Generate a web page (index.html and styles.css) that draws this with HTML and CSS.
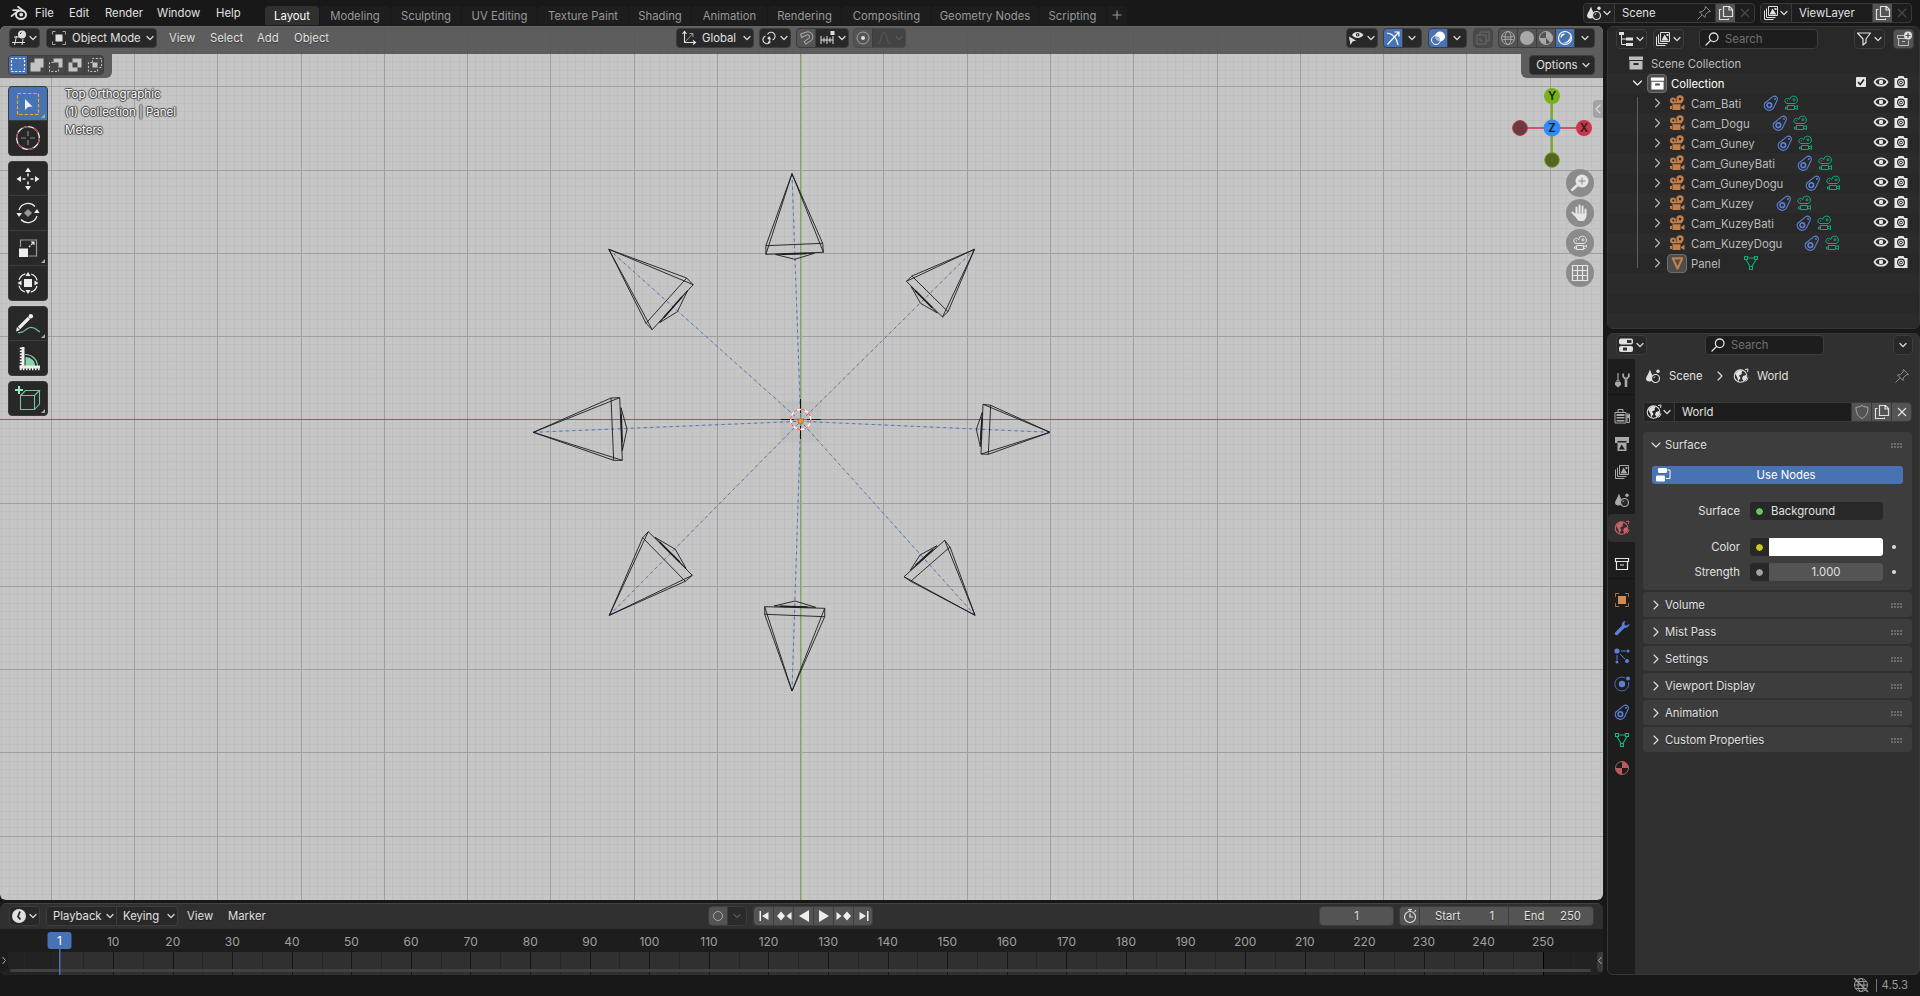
FILE: index.html
```html
<!DOCTYPE html>
<html lang="en">
<head>
<meta charset="utf-8">
<title>Blender</title>
<link rel="stylesheet" href="styles.css">
</head>
<body>
<svg class="sprite" aria-hidden="true">
  <symbol id="blender" viewBox="0 0 18 16"><path d="M1.5 11.2 9 5.2H3.2M8 1.8l6.6 5" fill="none" stroke="currentColor" stroke-width="1.7" stroke-linecap="round" stroke-linejoin="round"/><ellipse cx="11" cy="9.7" rx="5" ry="4.3" fill="none" stroke="currentColor" stroke-width="2"/><circle cx="11.2" cy="9.6" r="1.9" fill="currentColor"/></symbol>
  <symbol id="plus" viewBox="0 0 10 10"><path d="M5 .5v9M.5 5h9" fill="none" stroke="currentColor" stroke-width="1.1"/></symbol>
  <symbol id="down" viewBox="0 0 10 10"><path d="M2 3.5 5 6.7 8 3.5" fill="none" stroke="currentColor" stroke-width="1.2" stroke-linecap="round" stroke-linejoin="round"/></symbol>
  <symbol id="right" viewBox="0 0 10 10"><path d="M3 1 7 5 3 9" fill="none" stroke="currentColor" stroke-width="1.1" stroke-linecap="round" stroke-linejoin="round"/></symbol>
  <symbol id="wide-down" viewBox="0 0 10 10"><path d="M1 3 5 7 9 3" fill="none" stroke="currentColor" stroke-width="1.1" stroke-linecap="round" stroke-linejoin="round"/></symbol>
  <symbol id="editor3d" viewBox="0 0 16 16"><path d="M3 7h5M1 12.500h13M5.500 6 3.500 15M12 9l-1 6" fill="none" stroke="currentColor"/><circle cx="11" cy="4.500" r="4" fill="currentColor"/><path d="M9.200 4a2 2 0 0 1 1.400-1.400" stroke="#282828" fill="none"/></symbol>
  <symbol id="objmode" viewBox="0 0 16 16"><rect x="4.500" y="4.500" width="7" height="7" fill="currentColor"/><path d="M1.500 4.500v-3h3M11.500 1.500h3v3M14.500 11.500v3h-3M4.500 14.500h-3v-3" fill="none" stroke="currentColor" opacity=".65"/></symbol>
  <symbol id="orient" viewBox="0 0 16 16"><path d="M3.500 2v10.500H14M1.500 4 3.500 1.500 5.500 4M12 10.500l2.500 2-2.500 2" fill="none" stroke="currentColor" stroke-width="1.100"/><path d="M4 12 11.500 4M8.500 3.500H12V7" fill="none" stroke="currentColor" opacity=".6"/></symbol>
  <symbol id="pivot" viewBox="0 0 16 16"><circle cx="8" cy="8.300" r="1.300" fill="currentColor"/><path d="M6.500 4.500a4 4 0 1 1 5 5.500M9.500 11.500a4 4 0 1 1-5-5.500M8 6.500a4 4 0 0 1-1 6" fill="none" stroke="currentColor" stroke-width="1.100"/></symbol>
  <symbol id="magnet" viewBox="0 0 16 16"><path d="M2 5.500 6.500 2.500a5 5 0 0 1 7 7L9 14 7 12l4-4.500a2 2 0 0 0-3-2.500L3.500 8.500Z" fill="none" stroke="currentColor" transform="rotate(12 8 8)"/></symbol>
  <symbol id="snapinc" viewBox="0 0 16 16"><path d="M2 6v8M5 7.500v5M8 6v8M11 7.500v5M14 6v8M2 10h12" stroke="currentColor" fill="none"/><rect x="11.500" y="1" width="4" height="4" fill="currentColor"/></symbol>
  <symbol id="prop" viewBox="0 0 16 16"><circle cx="8" cy="8" r="6" fill="none" stroke="currentColor" opacity=".55"/><circle cx="8" cy="8" r="2" fill="currentColor"/></symbol>
  <symbol id="falloff" viewBox="0 0 16 16"><path d="M1.500 13.500c4 0 3.500-11 6.500-11s2.500 11 6.500 11" fill="none" stroke="currentColor"/></symbol>
  <symbol id="visib" viewBox="0 0 16 16"><path d="M4 5c1.500-3.500 8.500-4.500 11.500 0-3 4-9 4-11.500 0Z" fill="currentColor"/><circle cx="9.700" cy="4.700" r="1.800" fill="#282828"/><circle cx="9.700" cy="4.700" r=".7" fill="currentColor"/><path d="M1 6.500 8 10.500 4.500 11.500 2.500 15Z" fill="currentColor"/></symbol>
  <symbol id="gizmo" viewBox="0 0 16 16"><path d="M2 3c7 1 10 5 11 12M2.500 14.500 13.500 2.500M9.500 2h4.500v4.500" fill="none" stroke="currentColor" stroke-width="1.200"/></symbol>
  <symbol id="overlay" viewBox="0 0 16 16"><circle cx="10" cy="6.500" r="5" fill="currentColor"/><circle cx="6" cy="10" r="4.500" fill="#4772b3" fill-opacity=".5" stroke="currentColor"/></symbol>
  <symbol id="xray" viewBox="0 0 16 16"><path d="M2 5h9v9H2ZM5 5V2h9v9h-3M5 8v3h3" fill="none" stroke="currentColor"/></symbol>
  <symbol id="wire" viewBox="0 0 16 16"><g fill="none" stroke="currentColor"><circle cx="8" cy="8" r="6.500"/><ellipse cx="8" cy="8" rx="3" ry="6.500"/><path d="M2 6c4 1.500 8 1.500 12 0M2 10c4-1 8-1 12 0"/></g></symbol>
  <symbol id="solid" viewBox="0 0 16 16"><circle cx="8" cy="8" r="7" fill="currentColor"/></symbol>
  <symbol id="material" viewBox="0 0 16 16"><circle cx="8" cy="8" r="6.500" fill="none" stroke="currentColor"/><path d="M8 8V1.500A6.500 6.500 0 0 1 14.500 8ZM8 8v6.500A6.500 6.500 0 0 1 1.500 8Z" fill="currentColor"/></symbol>
  <symbol id="matprev" viewBox="0 0 16 16"><circle cx="8" cy="8" r="6.500" fill="none" stroke="currentColor"/><path d="M8 1.500A6.500 6.500 0 0 1 14.500 8 6.500 6.500 0 0 1 12.500 12.700L8 8ZM8 8v6.500A6.500 6.500 0 0 1 1.500 8Z" fill="currentColor"/></symbol>
  <symbol id="rendered" viewBox="0 0 16 16"><circle cx="8" cy="8" r="6.500" fill="none" stroke="currentColor" stroke-width="1.200"/><path d="M4 7.500a4 4 0 0 1 3.500-3.500" fill="none" stroke="currentColor" stroke-width="1.300"/><path d="M13.500 5.500A6 6 0 0 1 6 13c4-.5 6.500-3 7.500-7.500Z" fill="currentColor"/></symbol>
  <symbol id="outliner" viewBox="0 0 16 16"><path d="M1 1h5v3H1ZM8 6.500h7v3H8ZM8 12h7v3H8Z" fill="currentColor"/><path d="M3.500 4v9.500H8M3.500 8H8" fill="none" stroke="currentColor"/></symbol>
  <symbol id="images" viewBox="0 0 16 16"><path d="M5.500 1.500h9v9h-9ZM3.500 3.500v9h9M1.500 5.500v9h9" fill="none" stroke="currentColor"/><path d="M6.500 9.500 9.500 3.500 13.500 9.500ZM11.500 3h2v2h-2Z" fill="currentColor"/></symbol>
  <symbol id="search" viewBox="0 0 16 16"><circle cx="9.700" cy="6.300" r="4.300" fill="none" stroke="currentColor" stroke-width="1.300"/><path d="M6.500 9.500 2 14" stroke="currentColor" stroke-width="1.300" stroke-linecap="round"/></symbol>
  <symbol id="filter" viewBox="0 0 16 16"><path d="M1.500 2h13L10 8v3.500L7 14V8Z" fill="none" stroke="currentColor" stroke-width="1.200" stroke-linejoin="round"/></symbol>
  <symbol id="newcoll" viewBox="0 0 16 16"><path d="M8 4.500H1.500v3h8M2.500 7.500v7h10V9.500M6 10.500h3" fill="none" stroke="currentColor" opacity=".75"/><circle cx="12" cy="4.500" r="4" fill="currentColor"/><path d="M9.500 4.500h5M12 2v5" stroke="#545454" stroke-width="1.200"/></symbol>
  <symbol id="coll" viewBox="0 0 16 16"><path d="M1 1.500h14V5H1ZM1.500 6h13v8.500h-13ZM5.500 8v2h5V8Z" fill="currentColor" fill-rule="evenodd"/></symbol>
  <symbol id="coll-line" viewBox="0 0 16 16"><path d="M1.500 2.500h13v3h-13ZM2.500 5.500v8h11v-8M6 9h4" fill="none" stroke="currentColor" stroke-width="1.200"/></symbol>
  <symbol id="cam" viewBox="0 0 16 16"><circle cx="4" cy="5.500" r="3" fill="currentColor"/><circle cx="11" cy="4" r="3.700" fill="currentColor"/><path d="M3 6.500h10v1.700H3ZM3.500 9.300h8v5.700h-8ZM12 12l3.500-2.500v5.500L12 13Z M1 11h2v3H1Z" fill="currentColor"/><circle cx="4.300" cy="5.500" r="1" fill="#29241f"/><circle cx="11" cy="4" r="1.200" fill="#29241f"/></symbol>
  <symbol id="camdata" viewBox="0 0 16 16"><g fill="none" stroke="currentColor"><path d="M4 8.500a2.600 2.600 0 1 1 2.700-3.800 3.900 3.900 0 1 1 5.500 3.800Z"/><path d="M4.500 10.500h7v4h-7ZM11.500 12l3-1.500v4l-3-1.500M4.500 12H2.500v2h2"/><circle cx="11" cy="4.800" r="1"/><path d="M4 5.800h1"/></g></symbol>
  <symbol id="constraint" viewBox="0 0 16 16"><g fill="none" stroke="currentColor" stroke-width="1.100"><path d="M1.700 8.200 9.500 1.900c3-1.900 5.500.3 4.700 3.100l-3.500 7.500A4.800 4.800 0 1 1 1.700 8.200Z"/><circle cx="6.300" cy="10.200" r="2.300" stroke-width="1.700"/></g><circle cx="12" cy="4" r="1" fill="currentColor"/></symbol>
  <symbol id="tri" viewBox="0 0 16 16"><path d="M3 2.500h10L8 13.500Z" fill="none" stroke="currentColor" stroke-width="2.400" stroke-linejoin="round"/></symbol>
  <symbol id="meshdata" viewBox="0 0 16 16"><path d="M4.500 3h7M3 4.500 7.300 12M13 4.500 8.700 12M1.500 1.500h3v3h-3ZM11.500 1.500h3v3h-3ZM6.500 11.500h3v3h-3Z" fill="none" stroke="currentColor" stroke-width="1.100"/></symbol>
  <symbol id="eye" viewBox="0 0 16 16"><path d="M1.500 8C4 3 12 3 14.500 8 12 13 4 13 1.500 8Z" fill="none" stroke="currentColor" stroke-width="1.700"/><circle cx="8" cy="8" r="2.200" fill="currentColor"/></symbol>
  <symbol id="photo" viewBox="0 0 16 16"><path d="M1.500 4h3l1-2h5l1 2h3v10h-13Z" fill="currentColor"/><circle cx="8" cy="8.500" r="3.400" fill="none" stroke="#282828" stroke-width="1.200"/><circle cx="8" cy="8.500" r="1.400" fill="none" stroke="#282828"/></symbol>
  <symbol id="check" viewBox="0 0 16 16"><rect x="3" y="3" width="10" height="10" rx="1" fill="currentColor"/><path d="m5 8 2.200 2.500L11 5.500" fill="none" stroke="#222" stroke-width="1.600"/></symbol>
  <symbol id="propedit" viewBox="0 0 16 16"><rect x="1" y="1.500" width="14" height="6" rx="2" fill="currentColor"/><rect x="1" y="9" width="14" height="6" rx="2" fill="currentColor"/><path d="M9 3h4.500v3H9ZM5 10.500h4v3H5Z" fill="#303030"/></symbol>
  <symbol id="scene" viewBox="0 0 16 16"><path d="M5 1.500C6 5 8 8 8 11c0 1-.8 2.500-3.500 2.500S1 12 1 10.500C1.500 8 4 5 5 1.500Z" fill="currentColor"/><circle cx="10.500" cy="10.500" r="4" fill="#282828" stroke="currentColor" stroke-width="1.200"/><path d="M8.800 10a2 2 0 0 1 1.400-1.300" fill="none" stroke="currentColor"/><circle cx="13" cy="3.300" r="1.700" fill="currentColor"/></symbol>
  <symbol id="world" viewBox="0 0 16 16"><circle cx="7.500" cy="8" r="6.300" fill="none" stroke="currentColor" stroke-width="1.100"/><path d="M2 5.500 6 2l4 .5-1.500 2L9 6 6 7.500 7.500 10 5 13.500 4.500 10ZM10 8l3-1v3.500L10.500 13 9 10.500Z" fill="currentColor"/><path d="M12 1.500 15 1l-.5 3M12.500 13.500a6 6 0 0 0 2.500-4" fill="none" stroke="currentColor"/></symbol>
  <symbol id="pin" viewBox="0 0 16 16"><path d="M9.500 1.500 14.500 6.500 12 7 9.500 9.500 9 12.500 3.500 7 6.500 6.500 9 4ZM6 10 1.500 14.500" fill="none" stroke="currentColor" stroke-linejoin="round"/></symbol>
  <symbol id="copy" viewBox="0 0 16 16"><path d="M5.500 1.500h6l3 3v7h-9ZM11 1.500v3.500h3.500M3.500 4.500h-2v10h9v-1" fill="none" stroke="currentColor" stroke-width="1.200"/></symbol>
  <symbol id="close" viewBox="0 0 16 16"><path d="m4 4 8 8M12 4l-8 8" stroke="currentColor" stroke-width="1.200"/></symbol>
  <symbol id="shield" viewBox="0 0 16 16"><path d="M8 1.500c2 1.300 4 1.700 6 1.800 0 5-1.500 9-6 11.200C3.500 12.300 2 8.300 2 3.300c2-.1 4-.5 6-1.800Z" fill="none" stroke="currentColor"/></symbol>
  <symbol id="nodes" viewBox="0 0 16 16"><rect x="3" y="1" width="9" height="5" rx="1.200" fill="currentColor"/><rect x="1" y="8.500" width="9" height="6" rx="1.200" fill="currentColor"/><path d="M12.500 3H15v8.500h-4" fill="none" stroke="currentColor"/></symbol>
  <symbol id="tool" viewBox="0 0 16 16"><path d="M4 1v8" stroke="currentColor" stroke-width="1.200"/><path d="M2 9h4M1.500 10.500h5v2.500L4 15l-2.500-2Z" fill="currentColor" stroke="currentColor"/><path d="M12 15V7.500" stroke="currentColor" stroke-width="2.600"/><path d="M9.200 1.500v3l1.800 2h2l1.800-2v-3" fill="none" stroke="currentColor" stroke-width="1.800"/></symbol>
  <symbol id="render" viewBox="0 0 16 16"><path d="M1 4.500h11V15H1ZM4 4V1.500h5V4M13 6h2.500v8.500H13Z" fill="none" stroke="currentColor"/><path d="M2.500 6h8v2h-8ZM2.500 9h8v1.500h-8ZM2.500 12h8v1.500h-8ZM13 7h2v3h-2Z" fill="currentColor"/></symbol>
  <symbol id="output" viewBox="0 0 16 16"><path d="M1 1h14v6h-2.500V5h-9v2H1ZM3.500 6.500h9v8.500h-9Z" fill="currentColor"/><path d="m5 13.500 2.500-5 3.500 5Z" fill="#1d1d1d"/></symbol>
  <symbol id="object" viewBox="0 0 16 16"><rect x="4" y="4" width="8" height="8" fill="currentColor"/><path d="M1.500 5V1.500H5M11 1.500h3.500V5M14.500 11v3.500H11M5 14.500H1.500V11" fill="none" stroke="currentColor" opacity=".75"/></symbol>
  <symbol id="wrench" viewBox="0 0 16 16"><path d="M2.500 13.500 9 7" stroke="currentColor" stroke-width="3.500" stroke-linecap="round"/><path d="M11.500 1C8.500 1 7.500 4 8 6.500l1.500 1.500c2.500.5 6-1 6-4.500L13 5.500l-2.300-.3-.3-2Z" fill="currentColor"/></symbol>
  <symbol id="particles" viewBox="0 0 16 16"><circle cx="3" cy="3" r="2.600" fill="currentColor"/><circle cx="14" cy="3" r="1.500" fill="currentColor"/><circle cx="3" cy="14" r="1.500" fill="currentColor"/><circle cx="13" cy="13" r="2" fill="currentColor"/><path d="M7 3h5M3 7v5M6 6l5 5" stroke="currentColor" fill="none"/></symbol>
  <symbol id="physics" viewBox="0 0 16 16"><circle cx="8" cy="8" r="3.200" fill="currentColor"/><circle cx="14" cy="2.500" r="1.900" fill="currentColor"/><path d="M11 1.800A7 7 0 1 0 14.500 6" fill="none" stroke="currentColor" opacity=".8"/></symbol>
  <symbol id="clock" viewBox="0 0 16 16"><circle cx="8" cy="8" r="7" fill="currentColor"/><path d="M9 3.500 7 8.500l2.500 3" fill="none" stroke="#282828" stroke-width="1.800"/></symbol>
  <symbol id="rec" viewBox="0 0 16 16"><circle cx="8" cy="8" r="4.500" fill="none" stroke="currentColor"/></symbol>
  <symbol id="first" viewBox="0 0 16 16"><path d="M3.500 3H5v10H3.500ZM12.500 4v8L6 8Z" fill="currentColor"/></symbol>
  <symbol id="prevkey" viewBox="0 0 16 16"><path d="M5 3.500 9 8 5 12.500 1 8ZM15.500 4v8L10.500 8Z" fill="currentColor"/></symbol>
  <symbol id="playback" viewBox="0 0 16 16"><path d="M13 2v12L3 8Z" fill="currentColor"/></symbol>
  <symbol id="stopwatch" viewBox="0 0 16 16"><circle cx="8" cy="9" r="5.500" fill="none" stroke="currentColor" stroke-width="1.200"/><path d="M8 5.500V9h3M6 1.500h4M8 1.500v2M12.500 3.500l1.500-1" fill="none" stroke="currentColor" stroke-width="1.200"/></symbol>
  <symbol id="offline" viewBox="0 0 16 16"><g fill="none" stroke="currentColor"><circle cx="8" cy="8" r="6.500"/><ellipse cx="8" cy="8" rx="3" ry="6.500"/><path d="M1.500 8h13M2.500 4.500h11M2.500 11.500h11"/><path d="M1 1l14 14" stroke-width="1.500"/></g></symbol>
  <symbol id="s-set" viewBox="0 0 16 16"><rect x="1.500" y="1.500" width="13" height="13" fill="none" stroke="currentColor" stroke-width="1.200" stroke-dasharray="2 1.700"/></symbol>
  <symbol id="s-ext" viewBox="0 0 16 16"><path d="M5.500 1.500h9v9h-3v4h-10v-9h4Z" fill="currentColor"/></symbol>
  <symbol id="s-sub" viewBox="0 0 16 16"><path d="M5.500 1.500h9v9h-4v-5h-5Z" fill="currentColor"/><path d="M5.500 5.500h-4v9h9v-4" fill="none" stroke="currentColor" stroke-dasharray="2 1.700"/></symbol>
  <symbol id="s-dif" viewBox="0 0 16 16"><path d="M5.500 1.500h9v9h-4v4h-9v-9h4ZM5.500 5.500v5h5v-5Z" fill="currentColor" fill-rule="evenodd"/></symbol>
  <symbol id="s-int" viewBox="0 0 16 16"><path d="M5.500 5.500h5v5h-5Z" fill="currentColor"/><path d="M5.500 5.500v-4h9v9h-4M5.500 5.500h-4v9h9v-4" fill="none" stroke="currentColor" stroke-dasharray="2 1.700"/></symbol>
  <symbol id="t-select" viewBox="0 0 26 26"><rect x="2.500" y="2.500" width="21" height="21" fill="none" stroke="#f5a623" stroke-width="1.200" stroke-dasharray="3.500 1.750"/><path d="M10 8v11l3-3 4.500-.5Z" fill="#eee"/></symbol>
  <symbol id="t-cursor" viewBox="0 0 26 26"><circle cx="13" cy="13" r="11.300" fill="none" stroke="#eee" stroke-width="1.300"/><circle cx="13" cy="13" r="11.300" fill="none" stroke="#9b4549" stroke-width="1.400" stroke-dasharray="6 5.800"/><path d="M13 6v5M13 15v5M6 13h5M15 13h5" stroke="#888" stroke-width="1.200"/></symbol>
  <symbol id="t-move" viewBox="0 0 26 26"><path d="M13 1.500l3 4.500h-6ZM13 24.500l3-4.500h-6ZM1.500 13 6 10v6ZM24.500 13 20 10v6Z" fill="#eee"/><path d="M13 7.500v3M13 15.500v3M7.500 13h3M15.500 13h3" stroke="#eee" stroke-width="1.500"/></symbol>
  <symbol id="t-rotate" viewBox="0 0 26 26"><path d="M4 10A9.500 9.500 0 0 1 20 6.500M22 16A9.500 9.500 0 0 1 6 19.500" fill="none" stroke="#eee" stroke-width="1.200"/><path d="M1.500 13h5.500L4 17ZM19 13h5.500L22 9Z" fill="#eee"/><path d="M13 9.500 16.500 13 13 16.500 9.500 13Z" fill="#999" stroke="#999"/></symbol>
  <symbol id="t-scale" viewBox="0 0 26 26"><path d="M5.500 12V5h16v16h-8" fill="none" stroke="#999" stroke-width="1.200"/><rect x="4" y="13.500" width="9" height="8.500" fill="#eee"/><path d="m14 12 4-4" stroke="#eee" stroke-width="1.200" stroke-dasharray="2 1"/><path d="M15.500 6.500h4v4Z" fill="#eee"/></symbol>
  <symbol id="t-transform" viewBox="0 0 26 26"><circle cx="13" cy="13" r="9.500" fill="none" stroke="#eee" stroke-width="1.200" stroke-dasharray="9 5.900" stroke-dashoffset="-3"/><rect x="9" y="9" width="8" height="8" fill="#eee"/><path d="M13 2l2.500 4h-5ZM13 24l2.500-4h-5ZM2.500 13l4-2.500v5ZM23.500 13l-4-2.500v5Z" fill="#eee"/></symbol>
  <symbol id="t-annotate" viewBox="0 0 26 26"><path d="M3 21.500c7 1.500 6-4 12-5 5-.5 6 2 10 4.500" fill="none" stroke="#78c59c" stroke-width="1.200"/><path d="M4 17 14 7" stroke="#eee" stroke-width="3.200"/><circle cx="15.800" cy="5.200" r="2.200" fill="#eee"/><path d="M2 16 5 19 1 20.500Z" fill="#eee"/></symbol>
  <symbol id="t-measure" viewBox="0 0 26 26"><path d="M10.500 12a9 9 0 0 1 9.500 10h-9.500Z" fill="#86d6a8"/><path d="M10 9.500A12 12 0 0 1 22.500 22" fill="none" stroke="#86d6a8" stroke-width="1.100"/><path d="M8 2v21M4.500 22H25" stroke="#eee" stroke-width="3"/><path d="M6 2.500v22" stroke="#eee" stroke-width="2.500" stroke-dasharray="1.500 1.500"/><path d="M5 24h20" stroke="#eee" stroke-width="2.500" stroke-dasharray="1.500 1.500"/></symbol>
  <symbol id="t-cube" viewBox="0 0 26 26"><path d="M5.500 9.500h14v14h-14ZM5.500 9.500l5-5h14l-5 5M24.500 4.500V18l-5 5.500" fill="none" stroke="#78c59c" stroke-width="1.100"/><path d="M4 0v8M0 4h8" stroke="#9be8bd" stroke-width="2"/></symbol>
  <symbol id="n-zoom" viewBox="0 0 28 28"><circle cx="16" cy="12" r="6.500" fill="#e6e6e6"/><path d="m11.500 16-6 5.500" stroke="#e6e6e6" stroke-width="2.600"/><path d="M12.500 12h7M16 8.500v7" stroke="#888"/></symbol>
  <symbol id="n-hand" viewBox="0 0 28 28"><path d="M10.500 15V8.500M13.500 14V6.500M16.500 14V7.500M19.500 15.500v-5M10 17l-3.500-3.500" stroke="#e6e6e6" stroke-width="2" stroke-linecap="round"/><path d="M9.500 14.500h11c0 4-1 7-4 7.500h-3c-2-.5-3-2.500-6-7.500Z" fill="#e6e6e6"/></symbol>
  <symbol id="n-grid" viewBox="0 0 28 28"><path d="M6.500 6.500h15v15h-15ZM11.500 6.500v15M16.500 6.500v15M6.500 11.500h15M6.500 16.500h15" fill="none" stroke="#e6e6e6" stroke-width="1.200"/></symbol>
</svg>

<div class="app">
  <header class="topbar">
    <svg class="logo"><use href="#blender"/></svg>
    <nav class="menu"><span class="m-file">File</span><span class="m-edit">Edit</span><span class="m-render">Render</span><span class="m-window">Window</span><span>Help</span></nav>
    <nav class="tabs" id="tabs"></nav>
    <div class="idblock scene-id">
      <span class="part drop"><svg class="ic"><use href="#scene"/></svg><svg class="dn"><use href="#down"/></svg></span>
      <span class="part name">Scene<svg class="ic faint"><use href="#pin"/></svg></span>
      <span class="part light"><svg class="ic"><use href="#copy"/></svg></span>
      <span class="part off"><svg class="ic"><use href="#close"/></svg></span>
    </div>
    <div class="idblock layer-id">
      <span class="part drop"><svg class="ic"><use href="#images"/></svg><svg class="dn"><use href="#down"/></svg></span>
      <span class="part name">ViewLayer</span>
      <span class="part light"><svg class="ic"><use href="#copy"/></svg></span>
      <span class="part off"><svg class="ic"><use href="#close"/></svg></span>
    </div>
  </header>

  <div class="workspace">
    <div class="left">
      <section class="viewport">
        <svg class="scene3d" id="scene3d" viewBox="0 26 1603 874"></svg>
        <div class="vp-ui">
          <div class="vp-header">
            <span class="btn w31 b-editor"><svg class="ic"><use href="#editor3d"/></svg><svg class="dn"><use href="#down"/></svg></span>
            <span class="btn b-mode"><svg class="ic"><use href="#objmode"/></svg><b>Object Mode</b><svg class="dn"><use href="#down"/></svg></span>
            <span class="vm v1">View</span><span class="vm v2">Select</span><span class="vm v3">Add</span><span class="vm v4">Object</span>
            <span class="btn b-global"><svg class="ic"><use href="#orient"/></svg><b>Global</b><svg class="dn"><use href="#down"/></svg></span>
            <span class="btn b-pivot"><svg class="ic"><use href="#pivot"/></svg><svg class="dn"><use href="#down"/></svg></span>
            <span class="btn split b-snap"><i class="cell gray"><svg class="ic dim"><use href="#magnet"/></svg></i><svg class="ic"><use href="#snapinc"/></svg><svg class="dn"><use href="#down"/></svg></span>
            <span class="btn split b-prop"><i class="cell gray"><svg class="ic"><use href="#prop"/></svg></i><svg class="ic ghost"><use href="#falloff"/></svg><svg class="dn ghost"><use href="#down"/></svg></span>
            <span class="btn b-vis"><svg class="ic"><use href="#visib"/></svg><svg class="dn"><use href="#down"/></svg></span>
            <span class="btn split b-giz"><i class="cell blue"><svg class="ic"><use href="#gizmo"/></svg></i><svg class="dn"><use href="#down"/></svg></span>
            <span class="btn split b-over"><i class="cell blue"><svg class="ic"><use href="#overlay"/></svg></i><svg class="dn"><use href="#down"/></svg></span>
            <span class="btn b-xray"><svg class="ic"><use href="#xray"/></svg></span>
            <span class="btn split b-shade"><i class="cell gray"><svg class="ic dim"><use href="#wire"/></svg></i><i class="cell gray"><svg class="ic dim"><use href="#solid"/></svg></i><i class="cell gray"><svg class="ic dim"><use href="#matprev"/></svg></i><i class="cell blue"><svg class="ic"><use href="#rendered"/></svg></i><svg class="dn"><use href="#down"/></svg></span>
          </div>
          <div class="vp-sub">
            <div class="modes"><div class="moderow"><i class="cell blue"><svg class="ic"><use href="#s-set"/></svg></i><i class="cell"><svg class="ic"><use href="#s-ext"/></svg></i><i class="cell"><svg class="ic"><use href="#s-sub"/></svg></i><i class="cell"><svg class="ic"><use href="#s-dif"/></svg></i><i class="cell"><svg class="ic"><use href="#s-int"/></svg></i></div></div>
            <div class="options"><span class="btn"><b>Options</b><svg class="dn"><use href="#down"/></svg></span></div>
          </div>
          <div class="vp-body">
            <div class="toolbar">
              <div class="tgroup"><i class="on corner"><svg><use href="#t-select"/></svg></i><i><svg><use href="#t-cursor"/></svg></i></div>
              <div class="tgroup"><i><svg><use href="#t-move"/></svg></i><i><svg><use href="#t-rotate"/></svg></i><i class="corner"><svg><use href="#t-scale"/></svg></i><i><svg><use href="#t-transform"/></svg></i></div>
              <div class="tgroup"><i class="corner"><svg><use href="#t-annotate"/></svg></i><i><svg><use href="#t-measure"/></svg></i></div>
              <div class="tgroup"><i class="corner"><svg><use href="#t-cube"/></svg></i></div>
            </div>
            <div class="vp-info"><p>Top Orthographic</p><p>(1) Collection | Panel</p><p>Meters</p></div>
            <div class="nav">
              <div class="navtop"><svg class="axes" viewBox="0 0 82 82">
                <path d="M9 41h64" stroke="#d0334d" stroke-width="1.700"/><path d="M41 9v64" stroke="#78b017" stroke-width="2"/>
                <circle cx="9" cy="41" r="7.400" fill="#6d3a42" stroke="#b53249"/><circle cx="41" cy="73" r="7.400" fill="#566327" stroke="#78b017"/>
                <circle cx="73" cy="41" r="8" fill="#d0334d"/><circle cx="41" cy="9" r="8" fill="#78b017"/><circle cx="41" cy="41" r="8.500" fill="#2e8bfb"/>
                <g class="axis-names"><text x="41" y="13.200">Y</text><text x="73" y="45.200">X</text><text x="41" y="45.200">Z</text></g></svg>
                <span class="ntab"><svg class="dn flip"><use href="#right"/></svg></span></div>
              <div class="navbtns"><svg><use href="#n-zoom"/></svg><svg><use href="#n-hand"/></svg><svg class="pad"><use href="#camdata"/></svg><svg><use href="#n-grid"/></svg></div>
            </div>
          </div>
        </div>
      </section>

      <section class="timeline">
        <div class="tl-header">
          <span class="btn w31 b-editor"><svg class="ic"><use href="#clock"/></svg><svg class="dn"><use href="#down"/></svg></span>
          <span class="btn b-play"><b>Playback</b><svg class="dn"><use href="#down"/></svg></span><span class="btn b-key"><b>Keying</b><svg class="dn"><use href="#down"/></svg></span>
          <span class="vm t1">View</span><span class="vm t2">Marker</span>
          <span class="btn split b-rec"><i class="cell gray"><svg class="ic dim"><use href="#rec"/></svg></i><svg class="dn ghost"><use href="#down"/></svg></span>
          <span class="btn b-trans"><i><svg class="ic"><use href="#first"/></svg></i><i><svg class="ic"><use href="#prevkey"/></svg></i><i><svg class="ic"><use href="#playback"/></svg></i><i><svg class="ic flip"><use href="#playback"/></svg></i><i><svg class="ic flip"><use href="#prevkey"/></svg></i><i><svg class="ic flip"><use href="#first"/></svg></i></span>
          <span class="num b-frame">1</span>
          <span class="num b-range"><i class="watch"><svg class="ic"><use href="#stopwatch"/></svg></i><i class="start"><b>Start</b><b>1</b></i><i class="end"><b>End</b><b>250</b></i></span>
        </div>
        <svg class="ruler" id="ruler" viewBox="0 929 1603 46"></svg>
      </section>
    </div>

    <aside class="right">
      <section class="outliner">
        <div class="ol-header">
          <span class="btn w31"><svg class="ic"><use href="#outliner"/></svg><svg class="dn"><use href="#down"/></svg></span>
          <span class="btn w31 o2"><svg class="ic"><use href="#images"/></svg><svg class="dn"><use href="#down"/></svg></span>
          <span class="search"><svg class="ic"><use href="#search"/></svg>Search</span>
          <span class="btn w31 o3"><svg class="ic"><use href="#filter"/></svg><svg class="dn"><use href="#down"/></svg></span>
          <span class="btn newc"><svg class="ic"><use href="#newcoll"/></svg></span>
        </div>
        <div class="rows" id="rows"></div>
      </section>

      <section class="props">
        <div class="pr-header">
          <span class="btn w31"><svg class="ic"><use href="#propedit"/></svg><svg class="dn"><use href="#down"/></svg></span>
          <span class="search"><svg class="ic"><use href="#search"/></svg>Search</span>
          <span class="btn b-opt"><svg class="dn"><use href="#down"/></svg></span>
        </div>
        <div class="pr-body">
          <nav class="ptabs">
            <i class="p-tool"><svg><use href="#tool"/></svg></i>
            <i><svg><use href="#render"/></svg></i><i><svg><use href="#output"/></svg></i><i><svg><use href="#images"/></svg></i><i><svg><use href="#scene"/></svg></i><i class="active"><svg><use href="#world"/></svg></i>
            <i class="p-coll"><svg><use href="#coll-line"/></svg></i>
            <i class="p-obj"><svg><use href="#object"/></svg></i><i class="c-blue"><svg><use href="#wrench"/></svg></i><i class="c-blue"><svg><use href="#particles"/></svg></i><i class="c-blue"><svg><use href="#physics"/></svg></i><i class="c-blue"><svg><use href="#constraint"/></svg></i><i class="c-green"><svg><use href="#meshdata"/></svg></i><i class="c-red p-last"><svg><use href="#material"/></svg></i>
          </nav>
          <div class="pcontent">
            <div class="crumbs"><svg class="ic"><use href="#scene"/></svg><span class="c1">Scene</span><svg class="dn c2"><use href="#right"/></svg><svg class="ic"><use href="#world"/></svg><span class="c3">World</span><svg class="ic faint"><use href="#pin"/></svg></div>
            <div class="worldid">
              <span class="part drop"><svg class="ic"><use href="#world"/></svg><svg class="dn"><use href="#down"/></svg></span>
              <span class="part name">World</span>
              <span class="part light"><svg class="ic dim"><use href="#shield"/></svg></span><span class="part light"><svg class="ic"><use href="#copy"/></svg></span><span class="part light"><svg class="ic"><use href="#close"/></svg></span>
            </div>
            <div class="panel surface">
              <div class="phead"><svg class="dn"><use href="#wide-down"/></svg><span>Surface</span><i class="grip"></i></div>
              <div class="usenodes"><svg class="ic"><use href="#nodes"/></svg><span>Use Nodes</span></div>
              <div class="prow r1"><label>Surface</label><span class="field dark"><i class="sock green"></i>Background</span></div>
              <div class="prow r2"><label>Color</label><span class="field"><i class="sock yellow"></i><em class="white"></em></span><i class="key"></i></div>
              <div class="prow r3"><label>Strength</label><span class="field"><i class="sock grey"></i><em>1.000</em></span><i class="key"></i></div>
            </div>
            <div class="panels" id="panels"></div>
          </div>
        </div>
      </section>
    </aside>
  </div>

  <footer class="status"><svg class="ic"><use href="#offline"/></svg><i class="bar"></i><span>4.5.3</span></footer>
</div>
<script src="app.js"></script>
</body>
</html>
```
FILE: styles.css
```css
* { box-sizing: border-box; }
body { margin: 0; background: #181818; color: #e0e0e0; font-family: Inter, "Liberation Sans", sans-serif; font-size: 11.3px; line-height: 14px; overflow: hidden; }
i, em { font-style: normal; }
b { font-weight: 400; }
p { margin: 0; }
svg { display: block; flex: none; }
.sprite { position: absolute; width: 0; height: 0; }
.app { width: 1920px; height: 996px; display: flex; flex-direction: column; }
.ic { width: 16px; height: 16px; }
.dn { width: 10px; height: 10px; }
.flip { transform: scaleX(-1); }
.dim { color: #a8a8a8; }
.faint { color: #8a8a8a; }
.ghost { color: #5a5a5a; }

/* top bar */
.topbar { height: 26px; display: flex; }
.logo { width: 18px; height: 16px; margin: 5px 0 0 10px; }
.menu { display: flex; margin-left: 7px; width: 230px; padding-top: 6px; }
.m-file { width: 34px; } .m-edit { width: 36px; } .m-render { width: 52px; } .m-window { width: 59px; }
.tabs { display: flex; margin-top: 6px; height: 19px; width: 1318px; }
.tab { background: #1d1d1d; color: #989898; text-align: center; border-radius: 4px 4px 0 0; padding-top: 3px; margin-right: 1px; white-space: nowrap; }
.tab.on { background: #303030; color: #fff; }
.tab.plus { display: flex; justify-content: center; padding-top: 4px; }
.idblock, .worldid { display: flex; height: 20px; border: 1px solid #3a3a3a; border-radius: 4px; overflow: hidden; background: #1d1d1d; }
.idblock { margin-top: 3px; }
.scene-id { width: 172px; margin-right: 5px; }
.layer-id { width: 152px; }
.part { display: flex; align-items: center; justify-content: center; }
.drop { width: 31px; border-right: 1px solid #3a3a3a; background: #222; flex: none; }
.name { flex: 1; justify-content: space-between; padding: 0 3px 0 7px; }
.part.light { width: 20px; background: #545454; border-left: 1px solid #3a3a3a; flex: none; }
.part.off { width: 19px; color: #4a4a4a; flex: none; }

/* layout */
.workspace { height: 949px; display: flex; gap: 4px; }
.left { width: 1603px; display: flex; flex-direction: column; gap: 3px; }
.right { width: 313px; display: flex; flex-direction: column; gap: 4px; }

/* buttons */
.btn { height: 20px; display: flex; align-items: center; justify-content: space-evenly; background: #282828; border: 1px solid #3d3d3d; border-radius: 4px; overflow: hidden; flex: none; white-space: nowrap; }
.w31 { width: 31px; }
.split { justify-content: flex-start; }
.split > .dn { margin: 0 auto; }
.cell { width: 19px; height: 100%; display: flex; align-items: center; justify-content: center; border-right: 1px solid #3d3d3d; flex: none; }
.cell.gray { background: #545454; }
.cell.blue { background: #4772b3; color: #fff; }
.vm { text-shadow: 0 1px 1px #0006; white-space: nowrap; flex: none; }

/* viewport */
.viewport { height: 874px; position: relative; border-radius: 6px; overflow: hidden; background: #c6c6c6; }
.scene3d { position: absolute; left: 0; top: 0; width: 1603px; height: 874px; }
.vp-ui { position: relative; }
.vp-header { height: 28px; background: #545454eb; display: flex; align-items: center; padding: 1px 8px 6px 9px; border-top: 1px solid #676767; }
.b-mode { width: 111px; margin-left: 6px; padding: 0 1px 0 4px; justify-content: flex-start; }
.b-mode b { margin: 0 auto 0 5px; }
.v1 { width: 41px; margin-left: 12px; } .v2 { width: 47px; } .v3 { width: 37px; } .v4 { width: 382px; }
.b-global { width: 78px; padding: 0 1px 0 4px; justify-content: flex-start; }
.b-global b { margin: 0 auto 0 5px; }
.b-pivot { width: 32px; margin-left: 5px; }
.b-snap { width: 53px; margin-left: 5px; }
.b-snap > .ic, .b-prop > .ic { margin-left: 3px; }
.b-prop { width: 53px; margin-left: 4px; background: #434343; border-color: #4a4a4a; }
.b-vis { width: 32px; margin-left: auto; }
.b-giz { width: 39px; margin-left: 5px; }
.b-over { width: 39px; margin-left: 6px; }
.b-xray { width: 20px; margin-left: 6px; background: #4a4a4a; border-color: #484848; color: #6a6a6a; }
.b-shade { width: 97px; margin-left: 5px; }
.vp-sub { display: flex; justify-content: space-between; height: 24px; }
.modes { width: 112px; background: #545454eb; border-radius: 0 0 6px 0; padding: 1px 0 0 8px; }
.moderow { display: flex; width: 96px; height: 20px; border: 1px solid #3d3d3d; border-radius: 4px; background: #464646; overflow: hidden; color: #c4c4c4; }
.moderow .cell:last-child { border: 0; }
.options { width: 82px; background: #545454eb; border-radius: 0 0 0 6px; padding: 1px 8px 0; }
.options .btn { padding-left: 3px; }
.vp-body { display: flex; padding-top: 8px; }
.toolbar { width: 40px; margin-left: 8px; display: flex; flex-direction: column; gap: 5px; }
.tgroup { border: 1px solid #3a3a3a; border-radius: 4px; overflow: hidden; background: #282828; }
.tgroup i { height: 33px; display: flex; align-items: center; justify-content: center; position: relative; }
.tgroup i + i { border-top: 1px solid #3d3d3d; height: 35px; }
.tgroup svg { width: 26px; height: 26px; }
.tgroup .on { background: #4772b3; }
.tgroup .corner::after { content: ""; position: absolute; right: 2px; bottom: 2px; border: 2px solid transparent; border-right-color: #aaa; border-bottom-color: #aaa; }
.vp-info { margin-left: 17px; margin-top: -1px; color: #fff; font-size: 11.5px; line-height: 18px; text-shadow: 1px 0 1px #444, -1px 0 1px #444, 0 1px 1px #444, 0 -1px 1px #444, 0 0 1px #444; }
.nav { margin-left: auto; width: 92px; padding-top: 1px; }
.navtop { display: flex; }
.axes { width: 82px; height: 82px; }
.axis-names text { font: 600 11.5px Inter, sans-serif; text-anchor: middle; fill: #1c2412; }
.ntab { width: 10px; height: 18px; margin-top: 13px; background: #a3a3a3; border-radius: 4px 0 0 4px; color: #ddd; display: flex; align-items: center; }
.navbtns { display: flex; flex-direction: column; gap: 2px; margin-left: 55px; }
.navbtns svg { width: 28px; height: 28px; border-radius: 50%; background: #8b8b8b; color: #e6e6e6; }
.navbtns .pad { padding: 6px; }

/* timeline */
.timeline { height: 72px; background: #303030; border-radius: 6px; overflow: hidden; }
.tl-header { height: 26px; border-top: 1px solid #414141; display: flex; align-items: center; padding: 0 9px 1px 9px; }
.b-play, .b-key { justify-content: space-between; padding: 0 1px 0 6px; }
.b-play { width: 71px; margin-left: 6px; border-radius: 4px 0 0 4px; } .b-key { width: 61px; border-radius: 0 4px 4px 0; border-left: 0; }
.t1 { margin-left: 9px; width: 41px; } .t2 { width: 480px; }
.b-rec { width: 39px; background: #2b2b2b; }
.b-trans { margin-left: 6px; width: 120px; background: #545454; justify-content: flex-start; color: #eee; }
.b-trans i { width: 20px; height: 100%; display: flex; align-items: center; justify-content: center; border-right: 1px solid #3d3d3d; flex: none; }
.b-trans i:last-child { border: 0; }
.num { height: 20px; display: flex; align-items: center; background: #545454; border-radius: 4px; border: 1px solid #3d3d3d; text-shadow: 0 1px 1px #0008; }
.b-frame { width: 75px; margin-left: auto; justify-content: center; }
.b-range { width: 195px; margin-left: 5px; }
.b-range i { display: flex; height: 100%; align-items: center; justify-content: space-between; border-right: 1px solid #3d3d3d; }
.b-range .watch { width: 20px; justify-content: center; padding-left: 1px; } .start { width: 89px; padding: 0 14px 0 15px; } .b-range .end { flex: 1; padding: 0 12px 0 15px; border: 0; }
.ruler { width: 1603px; height: 46px; }
.ruler text { font: 12px Inter, sans-serif; fill: #a0a0a0; text-anchor: middle; }
.ruler .cur { fill: #fff; }

/* outliner */
.outliner { height: 303px; background: #282828; border: 1px solid #353535; border-radius: 6px; overflow: hidden; }
.ol-header { height: 26px; display: flex; align-items: center; padding: 0 5px 3px 8px; }
.o2 { margin-left: 6px; } .o3 { margin-left: 36px; }
.search { height: 20px; width: 119px; background: #1d1d1d; border: 1px solid #3d3d3d; border-radius: 4px; display: flex; align-items: center; gap: 5px; padding-left: 4px; color: #707070; }
.search .ic { color: #ddd; }
.ol-header .search { margin-left: 15px; }
.newc { width: 21px; margin-left: auto; background: #545454; }
.rows { position: relative; color: #bcbcbc; }
.rows::before { content: ""; position: absolute; left: 29px; top: 44px; width: 1px; height: 171px; background: #606060; z-index: 1; }
.row { height: 20px; display: flex; align-items: center; padding-right: 10px; }
.row:nth-child(even) { background: #2b2b2b; }
.row .lab { white-space: nowrap; padding-top: 1px; }
.row .right-ic { margin-left: auto; display: flex; gap: 4px; color: #e6e6e6; transform: translateY(-1px); }
.row.root { padding-left: 20px; } .row.root .lab { margin-left: 7px; }
.row.col { padding-left: 24px; color: #fff; }
.boxed { width: 20px; height: 19px; border-radius: 4px; background: #4d4d4d; border: 1px solid #6e6e6e; display: flex; align-items: center; justify-content: center; margin: 0 4px; flex: none; }
.boxed .ic { width: 15px; height: 15px; }
.row.obj { padding-left: 44px; }
.obj > .dn, .col > .dn { width: 11px; height: 10px; }
.obj .oic { color: #c27f4c; margin: 0 6px; }
.obj .cons { color: #5b7fd6; margin: 0 4px 0 22px; }
.obj .data { color: #13a67d; }
.obj .mesh { margin-left: 22px; }
.obj .tri { color: #c27f4c; }

/* properties */
.props { height: 642px; background: #303030; border: 1px solid #383838; border-radius: 6px; overflow: hidden; }
.pr-header { height: 25px; display: flex; align-items: center; padding: 0 6px 3px 8px; }
.pr-header .search { margin-left: 58px; }
.b-opt { width: 20px; margin-left: auto; }
.pr-body { display: flex; height: 616px; }
.ptabs { width: 27px; background: #1d1d1d; color: #a9a9a9; }
.ptabs i { display: flex; width: 27px; height: 28px; align-items: center; justify-content: center; }
.ptabs svg { width: 16px; height: 16px; }
.ptabs .p-tool { height: 36px; padding-top: 7px; margin-bottom: 7px; border-bottom: 1px solid #151515; }
.ptabs .active { background: #303030; color: #cf6068; border-radius: 4px 0 0 4px; }
.ptabs .p-coll { height: 30px; margin-top: 7px; border-bottom: 1px solid #151515; color: #e6e6e6; }
.ptabs .p-obj { margin-top: 7px; color: #d08a52; }
.c-blue { color: #5b7fd6; } .c-green { color: #13b389; } .c-red { color: #b75b63; }
.pcontent { flex: 1; padding: 7px 7px 0 8px; }
.crumbs { display: flex; align-items: center; height: 20px; padding: 0 2px; }
.c1 { margin-left: 8px; width: 46px; } .c2 { margin-right: 8px; } .c3 { margin-left: 8px; margin-right: auto; }
.worldid { margin-top: 16px; width: 269px; }
.panel { background: #3d3d3d; border-radius: 4px; width: 269px; }
.surface { height: 158px; margin-top: 10px; }
.phead { height: 25px; display: flex; align-items: center; padding: 0 9px 0 8px; text-shadow: 0 1px 1px #0006; }
.phead span { margin-left: 4px; margin-right: auto; padding-top: 1px; }
.grip { width: 12px; height: 5px; margin-top: 2px; background: radial-gradient(circle at 1px 1px, #858585 .6px, transparent .9px) 0 0 / 3px 3px; }
.usenodes { margin: 9px 9px 0; height: 18px; background: #4772b3; border-radius: 3px; display: flex; align-items: center; color: #fff; padding-left: 3px; }
.usenodes span { flex: 1; text-align: center; padding-right: 2px; }
.prow { display: flex; height: 18px; align-items: center; }
.r1, .r2 { margin-top: 18px; } .r3 { margin-top: 7px; }
.prow label { width: 97px; text-align: right; margin-right: 10px; }
.field { width: 133px; height: 18px; display: flex; align-items: center; background: #282828; border-radius: 3px; overflow: hidden; }
.sock { width: 9px; height: 9px; border-radius: 50%; border: 1px solid #111; margin: 0 7px 0 5px; flex: none; }
.field em { flex: 1; height: 18px; background: #545454; text-align: center; line-height: 18px; margin-left: -2px; }
.field .white { background: #fff; }
.green { background: #63c763; } .yellow { background: #c7c729; } .grey { background: #a1a1a1; }
.key { width: 4px; height: 4px; border-radius: 50%; background: #ddd; margin-left: 9px; }
.panels { display: flex; flex-direction: column; gap: 2px; margin-top: 2px; }

/* status */
.status { height: 21px; display: flex; align-items: center; justify-content: flex-end; padding: 0 12px 1px 0; color: #999; }
.status .bar { width: 1px; height: 13px; background: #777; margin: 0 4px 0 7px; }
```
FILE: app.js
```js
const icon = (id, cls = 'ic') => `<svg class="${cls}"><use href="#${id}"/></svg>`;

// Workspace tabs: label and width
const tabs = [['Layout', 54], ['Modeling', 71], ['Sculpting', 71], ['UV Editing', 76], ['Texture Paint', 91], ['Shading', 63], ['Animation', 76], ['Rendering', 74], ['Compositing', 90], ['Geometry Nodes', 107], ['Scripting', 68], ['+', 21]];
document.getElementById('tabs').innerHTML = tabs.map(([t, w], i) =>
  `<span class="tab${i ? '' : ' on'}${t === '+' ? ' plus' : ''}" style="width:${w - (i ? 1 : 0)}px">${t === '+' ? icon('plus', 'dn') : t}</span>`).join('');

// Outliner
const vis = icon('eye') + icon('photo');
let rows = `<div class="row root">${icon('coll')}<span class="lab">Scene Collection</span></div>` +
  `<div class="row col">${icon('wide-down', 'dn')}<i class="boxed">${icon('coll')}</i><span class="lab">Collection</span><span class="right-ic">${icon('check')}${vis}</span></div>`;
for (const n of ['Bati', 'Dogu', 'Guney', 'GuneyBati', 'GuneyDogu', 'Kuzey', 'KuzeyBati', 'KuzeyDogu'])
  rows += `<div class="row obj">${icon('right', 'dn')}${icon('cam', 'ic oic')}<span class="lab">Cam_${n}</span>${icon('constraint', 'ic cons')}${icon('camdata', 'ic data')}<span class="right-ic">${vis}</span></div>`;
rows += `<div class="row obj">${icon('right', 'dn')}<i class="boxed">${icon('tri', 'ic tri')}</i><span class="lab">Panel</span>${icon('meshdata', 'ic data mesh')}<span class="right-ic">${vis}</span></div>`;
rows += '<div class="row"></div>'.repeat(3);
document.getElementById('rows').innerHTML = rows;

// Collapsed property panels
document.getElementById('panels').innerHTML = ['Volume', 'Mist Pass', 'Settings', 'Viewport Display', 'Animation', 'Custom Properties'].map(t =>
  `<div class="panel phead">${icon('right', 'dn')}<span>${t}</span><i class="grip"></i></div>`).join('');

// 3D viewport: grid, axes, cameras, cursor
const cx = 800.7, cy = 419.4, step = 83.27;
const line = (x1, y1, x2, y2, s, w = 1, extra = '') => `<line x1="${x1}" y1="${y1}" x2="${x2}" y2="${y2}" stroke="${s}" stroke-width="${w}" ${extra}/>`;
let minor = '', major = '';
for (let k = -100; k <= 100; k++) {
  const x = Math.floor(cx + k * step / 10) + .5, y = Math.round(cy + k * step / 10) + .5;
  const big = k % 10 === 0, col = big ? '#9f9f9f' : '#bfbfbf';
  let s = '';
  if (x > 0 && x < 1603) s += line(x, 26, x, 900, col);
  if (y > 26 && y < 900) s += line(0, y, 1603, y, col);
  if (big) major += s; else minor += s;
}
const cams = [
  { t: [792, 173.7], c: [[765.9, 254.3], [823.4, 252.3], [822.7, 243.3], [765.9, 245.7]], u: [[775.5, 254.5], [814.4, 253.3], [794.8, 259.3]] },
  { t: [608.8, 249.3], c: [[652.2, 329.7], [693.2, 284.7], [686.7, 278], [646, 323.3]], u: [[659.5, 322.7], [687.7, 290.3], [677.4, 311.7]] },
  { t: [974.5, 249.3], c: [[906.4, 281.3], [942.5, 317], [948, 311.7], [911.9, 276]], u: [[911.2, 286.7], [937.4, 313], [920.5, 303.3]] },
  { t: [533.3, 432.3], c: [[619.7, 397.7], [622.3, 460.3], [613.7, 460.3], [611, 398]], u: [[621, 407.7], [622.3, 450.7], [627, 429]] },
  { t: [1050, 432.3], c: [[983, 404.3], [981, 454], [988.3, 454.3], [990.7, 405.3]], u: [[982.3, 412.3], [980.3, 446.7], [976.3, 429.3]] },
  { t: [609.3, 615.3], c: [[648.3, 531.7], [692.3, 575.3], [685.3, 581.3], [642.7, 537.7]], u: [[655, 537.3], [686, 568.3], [675.3, 549.3]] },
  { t: [792, 691], c: [[764.7, 606.7], [824.7, 608.3], [824.7, 616.7], [764.7, 614.3]], u: [[774, 606], [815.7, 607.3], [795, 601]] },
  { t: [975, 615.3], c: [[944.7, 540.3], [904, 576.7], [910.7, 581.3], [950, 547]], u: [[937, 545.7], [910.3, 570.3], [920, 555]] }
];
let objs = '';
for (const { t, c, u } of cams) {
  objs += line(...t, 800.7, 421.3, '#4a6fae', 1, 'stroke-dasharray="3 3.500"') + line(...t, 800.7, 421.3, '#7a8fb8', 1, 'stroke-opacity=".3"');
  objs += `<g fill="none" stroke="#1c1c1c"><path d="M${c.join('L')}Z${c.map(p => `M${t}L${p}`).join('')}" stroke-width=".9"/><path d="M${u.join('L')}Z" stroke-width=".9"/>`;
  const [a, b] = u, m = [a[0] + (b[0] - a[0]) * .15, a[1] + (b[1] - a[1]) * .15], n = [a[0] + (b[0] - a[0]) * .8, a[1] + (b[1] - a[1]) * .8];
  objs += `<path d="M${m}L${n}" stroke-width="1.500"/></g>`;
}
document.getElementById('scene3d').innerHTML = minor + major +
  line(0, 419.5, 1603, 419.5, '#a8515c') + line(801, 26, 801, 900, '#a3b58f', 2) + line(800.5, 26, 800.5, 900, '#86a468') +
  '<rect x="780" y="400.700" width="41.700" height="41.600" fill="#999" fill-opacity=".13"/>' + objs +
  line(780.7, 419.5, 794, 419.5, '#111') + line(807, 419.5, 820.7, 419.5, '#111') + line(800.5, 399, 800.5, 413, '#111') + line(800.5, 426, 800.5, 439, '#111') +
  '<circle cx="800.700" cy="419.500" r="10" fill="none" stroke="#fff" stroke-width="1.300"/><circle cx="800.700" cy="419.500" r="10" fill="none" stroke="#ff5a5a" stroke-width="1.300" stroke-dasharray="3.930"/>' +
  '<circle cx="800.700" cy="421.300" r="2.700" fill="#f7941e" stroke="#7a6a45" stroke-width=".6"/>';

// Timeline ruler
const fx = f => 53.9 + f * 5.958;
let r = '<rect x="0" y="929" width="1603" height="23" fill="#1d1d1d"/><rect x="0" y="952" width="1603" height="23" fill="#222"/><rect x="60" y="952" width="1483.500" height="23" fill="#303030"/>';
for (let f = -5; f <= 255; f += 5) {
  const x = Math.floor(fx(f)) + .5;
  r += line(x, 952, x, 975, f === 250 ? '#000' : f % 10 || !f ? '#262626' : '#161616');
}
r += '<rect x="10" y="969" width="1581" height="3" rx="1.500" fill="#414141"/>';
for (let f = 10; f <= 250; f += 10) r += `<text x="${fx(f) - .3}" y="945.600">${f}</text>`;
r += '<rect x="59" y="940" width="1.500" height="35" fill="#4772b3"/><rect x="47.500" y="932" width="24" height="17" rx="3" fill="#4772b3"/><text class="cur" x="59.500" y="944.800">1</text>' +
  '<rect x="-4" y="951" width="12" height="20" rx="4" fill="#1c1c1c"/><path d="m2.500 957 3 3.500-3 3.500" fill="none" stroke="#aaa"/>' +
  '<rect x="1597" y="952" width="10" height="20" rx="4" fill="#3a3a3a"/><path d="m1601.500 957-3 3.500 3 3.500" fill="none" stroke="#aaa"/>';
document.getElementById('ruler').innerHTML = r;
```
